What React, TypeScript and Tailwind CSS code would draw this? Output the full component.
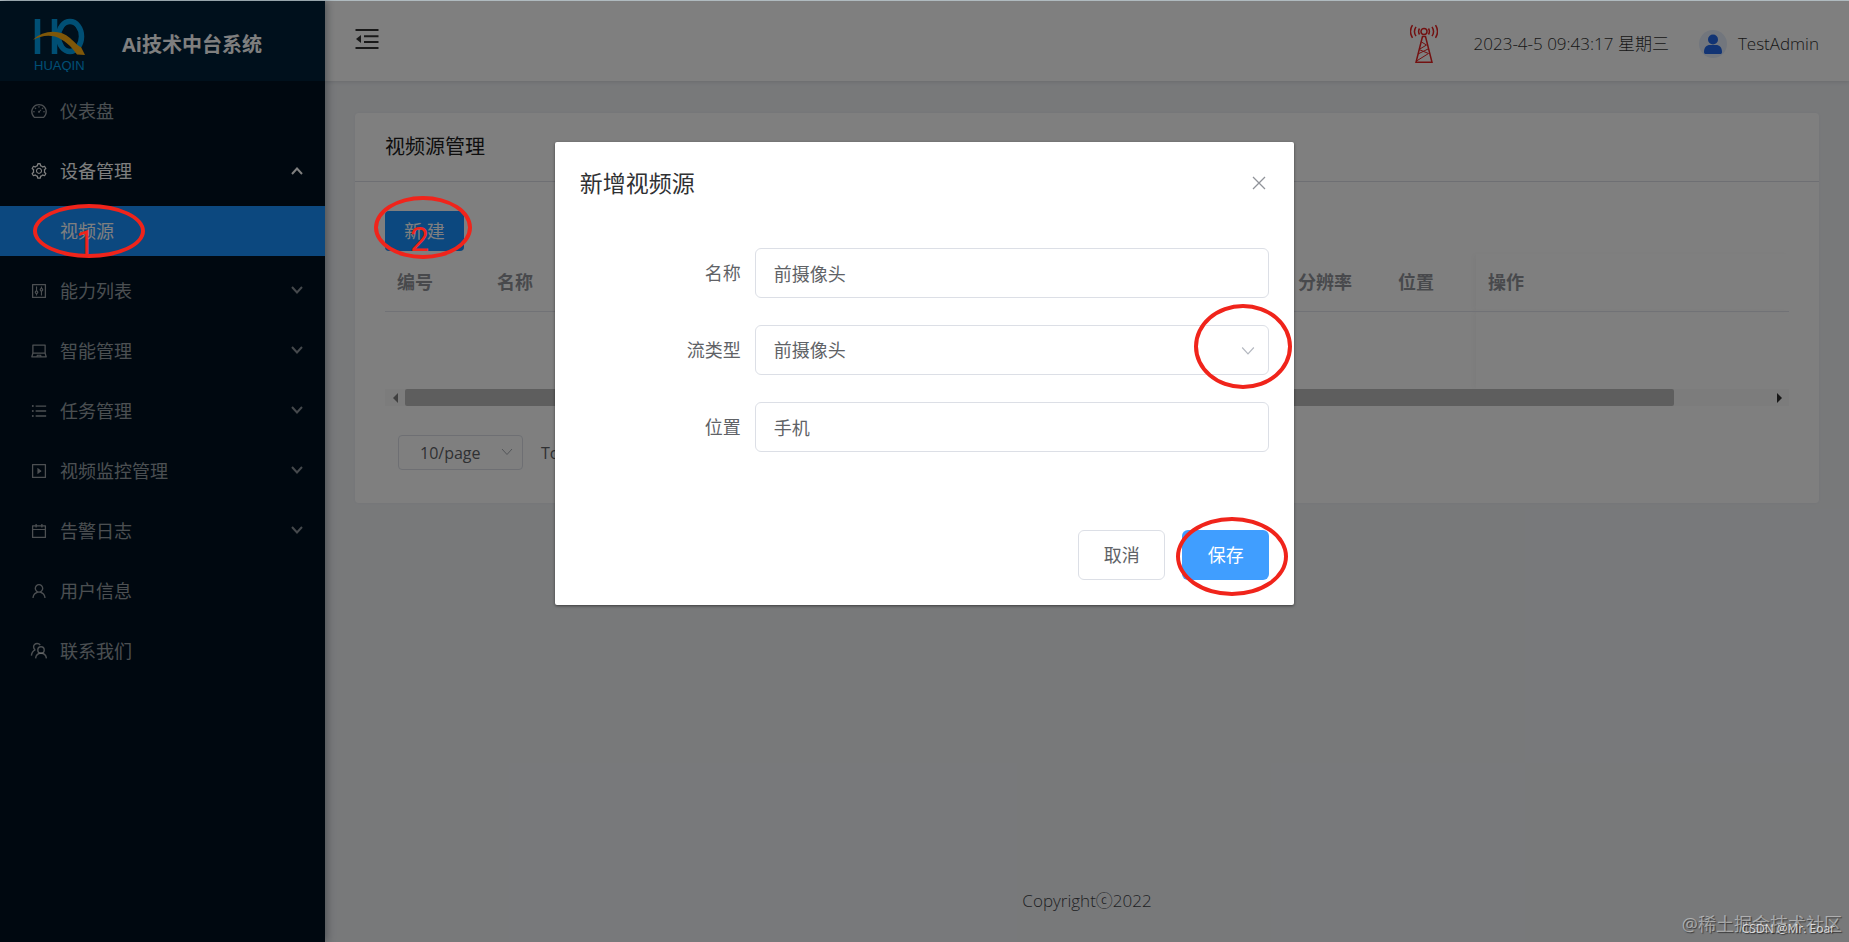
import { useState } from "react";
import type { ReactNode } from "react";
import {
  AiOutlineCalendar,
  AiOutlineControl,
  AiOutlineDashboard,
  AiOutlineLaptop,
  AiOutlinePlaySquare,
  AiOutlineSetting,
  AiOutlineUnorderedList,
  AiOutlineUser,
} from "react-icons/ai";

function Chevron({ className, thin }: { className?: string; thin?: boolean }) {
  return (
    <svg viewBox="0 0 12 8" className={className} fill="none" stroke="currentColor" strokeWidth={thin ? 1 : 2}>
      <path d="M1 1l5 5.5L11 1" />
    </svg>
  );
}

function FoldIcon() {
  return (
    <svg viewBox="0 0 24 22" className="w-6 h-[22px]">
      <path d="M0.5 1h23v2h-23zM9 7.3h14.5v1.9H9zM9 13h14.5v1.9H9zM0.5 19h23v2h-23zM1 11l5-4v8z" fill="currentColor" />
    </svg>
  );
}

function ContactIcon() {
  return (
    <svg viewBox="0 0 18 18" width="18" height="18" fill="none" stroke="currentColor" strokeWidth="1.4">
      <circle cx="11" cy="8" r="3.2" />
      <path d="M5.6 16.4c.3-3 2.4-5.2 5.4-5.2s5.1 2.2 5.4 5.2" />
      <path d="M10.2 3.2C9.5 2 8.3 1.5 7.1 1.5c-2 0-3.5 1.5-3.5 3.4 0 1.3.7 2.3 1.7 2.9M1.4 13.6c.2-2.7 1.6-4.8 3.9-5.8" />
    </svg>
  );
}

function Logo() {
  return (
    <svg viewBox="0 0 54 54" className="w-[54px] h-[54px]" role="img" aria-label="HUAQIN">
      <g fill="none" stroke="#009fe8" strokeWidth="5.5">
        <path d="M4.5 1v35M21.5 1v35" />
        <ellipse cx="37" cy="18.5" rx="11.5" ry="15" />
      </g>
      <path d="M0 22C10 12 27 11 37 20c5 4.500 9 9 11 9l4 8-8-.5C38 28 31 21.500 22 18.500 14 16.500 6 18.500 0 22z" fill="#ffae10" />
      <text x="1" y="52" fontSize="13" fill="#009fe8" fontFamily="Liberation Sans, sans-serif">
        HUAQIN
      </text>
    </svg>
  );
}

function TowerIcon() {
  return (
    <svg viewBox="0 0 28 40" className="w-7 h-10" fill="none" stroke="#e62222" strokeWidth="1.5">
      <circle cx="14" cy="7.5" r="3" />
      <path d="M9.5 4.5c-1.2 2-1.2 4 0 6M6 2.8c-2 3-2 6.4 0 9.4M2.5 1.2c-2.6 4-2.6 8.6 0 12.6" />
      <path d="M18.5 4.5c1.2 2 1.2 4 0 6M22 2.8c2 3 2 6.4 0 9.4M25.5 1.2c2.6 4 2.6 8.6 0 12.6" />
      <path d="M12.5 12.5L6 38.2h16L15.5 12.5z" />
      <path d="M11.5 18l5 3-7.5 4.5 9.5 4-12 7.5M8 30l10-5" strokeWidth="1" />
    </svg>
  );
}

type MenuEntry = { label: string; icon: ReactNode; open?: boolean; group?: boolean; children?: string[] };

const menu: MenuEntry[] = [
  { label: "仪表盘", icon: <AiOutlineDashboard size={18} /> },
  { label: "设备管理", icon: <AiOutlineSetting size={18} />, group: true, open: true, children: ["视频源"] },
  { label: "能力列表", icon: <AiOutlineControl size={18} />, group: true },
  { label: "智能管理", icon: <AiOutlineLaptop size={18} />, group: true },
  { label: "任务管理", icon: <AiOutlineUnorderedList size={18} />, group: true },
  { label: "视频监控管理", icon: <AiOutlinePlaySquare size={18} />, group: true },
  { label: "告警日志", icon: <AiOutlineCalendar size={18} />, group: true },
  { label: "用户信息", icon: <AiOutlineUser size={18} /> },
  { label: "联系我们", icon: <ContactIcon /> },
];

function Sidebar() {
  return (
    <aside className="relative z-10 w-[325px] shrink-0 bg-[#001120] shadow-[2px_0_8px_rgba(0,21,41,0.35)]">
      <div className="flex items-center h-20 pt-[7px] pl-[33px] gap-[35px] bg-[#002038]">
        <Logo />
        <h1 className="text-xl font-bold text-white">Ai技术中台系统</h1>
      </div>
      <nav>
        <ul>
          {menu.map((item) => (
            <li key={item.label}>
              <button
                type="button"
                className={`flex items-center w-full h-15 pl-[30px] pr-[22px] gap-3 ${item.open ? "text-white" : "text-white/60"}`}
              >
                {item.icon}
                <span className="flex-1 text-left">{item.label}</span>
                {item.group && (
                  <Chevron className={item.open ? "w-3 h-2 rotate-180" : "w-3 h-2 mb-0.5 opacity-90"} />
                )}
              </button>
              {item.children?.map((child) => (
                <a key={child} href="#" className="flex items-center h-[50px] my-[5px] pl-15 bg-[#1890ff] text-white">
                  {child}
                </a>
              ))}
            </li>
          ))}
        </ul>
      </nav>
    </aside>
  );
}

function TopBar() {
  return (
    <header className="flex items-center h-20 px-[30px] bg-white shadow-[0_1px_4px_rgba(0,21,41,0.12)]">
      <button type="button" aria-label="折叠菜单" className="mb-1 text-black/80">
        <FoldIcon />
      </button>
      <div className="flex items-center ml-auto pt-1.5 text-[17px] font-light text-[#303030]">
        <TowerIcon />
        <span className="ml-9">2023-4-5 09:43:17 星期三</span>
        <span className="flex items-center justify-center w-7 h-7 ml-[30px] rounded-full bg-[#e4edfb]">
          <svg viewBox="0 0 18 20" className="w-[18px] h-5" fill="#2468e8">
            <circle cx="9" cy="5.5" r="5" />
            <path d="M0 18c0-4.500 2.500-7 6-7h6c3.500 0 6 2.500 6 7 0 1.500-.5 2-2 2H2c-1.500 0-2-.5-2-2z" />
          </svg>
        </span>
        <span className="ml-[11px]">TestAdmin</span>
      </div>
    </header>
  );
}

function SourceCard() {
  return (
    <section className="mx-[30px] mt-8 pb-[33px] bg-white rounded shadow-[0_0_3px_rgba(0,0,0,0.04)]">
      <div className="flex items-center h-[69px] px-[30px] border-b border-[#dcdfe6]">
        <h2 className="text-xl text-[#1d1d1d]">视频源管理</h2>
      </div>
      <div className="px-[30px] pt-[29px]">
        <button type="button" className="h-10 w-[79px] rounded bg-[#1890ff] text-white">
          新 建
        </button>
        <table className="w-full mt-[3px] table-fixed text-left text-[#909399]">
          <thead>
            <tr className="h-[57px] border-b border-[#e2e5ec]">
              <th scope="col" className="w-[100px] pl-3">编号</th>
              <th scope="col" className="w-[100px] pl-3">名称</th>
              <td />
              <th scope="col" className="w-[100px] pl-3">分辨率</th>
              <th scope="col" className="w-[90px] pl-3">位置</th>
              <th scope="col" className="w-[313px] pl-3 shadow-[-3px_0_6px_rgba(0,0,0,0.03)]">操作</th>
            </tr>
          </thead>
          <tbody>
            <tr className="h-[78px]">
              <td colSpan={5} />
              <td className="shadow-[-3px_0_6px_rgba(0,0,0,0.03)]" />
            </tr>
          </tbody>
        </table>
        <div className="flex items-center h-[17px] bg-[#f8f8f8]">
          <span className="w-5 flex justify-center">
            <span className="border-y-[5px] border-y-transparent border-r-[5px] border-r-[#808080]" />
          </span>
          <span className="flex-1 h-full">
            <span className="block w-[93%] h-full rounded-xs bg-[#bdbdbd]" />
          </span>
          <span className="w-5 flex justify-center">
            <span className="border-y-[5px] border-y-transparent border-l-[5px] border-l-[#303030]" />
          </span>
        </div>
        <div className="flex items-center mt-[29px] ml-[13px] gap-[18px] text-base text-[#606266]">
          <div className="relative">
            <select
              aria-label="每页条数"
              className="appearance-none w-[125px] h-[35px] pl-[21px] border border-[#dcdfe6] rounded"
            >
              <option>10/page</option>
            </select>
            <Chevron thin className="absolute right-2.5 top-[13px] w-3 h-2 text-[#a8abb2] pointer-events-none" />
          </div>
          <span>Total 0</span>
        </div>
      </div>
    </section>
  );
}

const fieldClass = "w-full h-[50px] pl-[18px] border border-[#dcdfe6] rounded-md bg-white text-[#606266]";

function Field({ id, label, children }: { id: string; label: string; children: ReactNode }) {
  return (
    <div className="flex items-center mb-[27px]">
      <label htmlFor={id} className="w-[175px] shrink-0 pr-3.5 text-right text-[#606266]">
        {label}
      </label>
      <div className="relative flex-1">{children}</div>
    </div>
  );
}

function SourceDialog() {
  const [name, setName] = useState("前摄像头");
  const [place, setPlace] = useState("手机");

  return (
    <div
      role="dialog"
      aria-labelledby="dialog-title"
      className="w-2/5 mx-auto mt-[15vh] p-[25px] bg-white rounded-xs shadow-[0_1px_3px_rgba(0,0,0,0.5)]"
    >
      <div className="flex items-center justify-between h-8">
        <h2 id="dialog-title" className="text-[23px] text-[#303133]">新增视频源</h2>
        <button type="button" aria-label="关闭" className="px-[3px] text-[#909399]">
          <svg viewBox="0 0 14 14" className="w-3.5 h-3.5" fill="none" stroke="currentColor" strokeWidth="1.3">
            <path d="M1 1l12 12M13 1L1 13" />
          </svg>
        </button>
      </div>
      <form className="pt-[49px]" onSubmit={(e) => e.preventDefault()}>
        <Field id="name" label="名称">
          <input id="name" className={fieldClass} value={name} onChange={(e) => setName(e.target.value)} />
        </Field>
        <Field id="type" label="流类型">
          <select id="type" className={`${fieldClass} appearance-none`}>
            <option>前摄像头</option>
          </select>
          <Chevron thin className="absolute right-3.5 top-[21px] w-3.5 h-2.5 text-[#b4b8c0] pointer-events-none" />
          <span className="absolute -right-[23px] -top-[21px] w-[98px] h-[85px] rounded-[50%] border-4 border-[#f0241b] pointer-events-none" />
        </Field>
        <Field id="place" label="位置">
          <input id="place" className={fieldClass} value={place} onChange={(e) => setPlace(e.target.value)} />
        </Field>
        <div className="flex justify-end gap-[17px] pt-[51px]">
          <button type="button" className="w-[87px] h-[50px] border border-[#dcdfe6] rounded-md text-[#606266]">
            取消
          </button>
          <div className="relative">
            <button type="submit" className="w-[87px] h-[50px] rounded-md bg-[#409eff] text-white">
              保存
            </button>
            <span className="absolute -left-1.5 -top-[13px] w-[112px] h-[79px] rounded-[50%] border-4 border-[#f0241b] pointer-events-none" />
          </div>
        </div>
      </form>
    </div>
  );
}

export default function App() {
  return (
    <div className="relative flex flex-col min-h-screen text-lg leading-6 font-['Open_Sans','Noto_Sans_CJK_SC',sans-serif]">
      <div className="h-px bg-[#b4c0c4]" />
      <div className="flex flex-1">
        <Sidebar />
        <div className="flex flex-col flex-1 min-w-0 bg-[#f0f2f5]">
          <TopBar />
          <main className="flex-1">
            <SourceCard />
          </main>
          <footer className="pb-[29px] text-center text-[17px] font-light text-[#404246]">Copyrightⓒ2022</footer>
        </div>
      </div>

      <div className="absolute inset-x-0 top-px bottom-0 z-20 bg-black/50">
        <SourceDialog />
      </div>

      {/* 步骤标注 */}
      <div className="absolute inset-0 z-30 pointer-events-none text-[#f0241b] text-[34px] font-['Roboto',sans-serif]">
        <span className="absolute left-[33px] top-[204px] w-[112px] h-[54px] rounded-[50%] border-4 border-[#f0241b]" />
        <span className="absolute left-[76px] top-[230px]">1</span>
        <span className="absolute left-[374px] top-[196px] w-[98px] h-[63px] rounded-[50%] border-4 border-[#f0241b]" />
        <span className="absolute left-[410px] top-[227px]">2</span>
      </div>

      {/* 水印 */}
      <span className="absolute right-[7px] bottom-[6px] z-30 text-white/45 [text-shadow:1px_1px_1px_rgba(0,0,0,0.5)]">
        @稀土掘金技术社区
      </span>
      <span className="absolute right-[14px] bottom-[5px] z-30 text-xs text-white/75 [text-shadow:1px_1px_1px_rgba(0,0,0,0.5)]">
        CSDN @Mr. Eoar
      </span>
    </div>
  );
}
